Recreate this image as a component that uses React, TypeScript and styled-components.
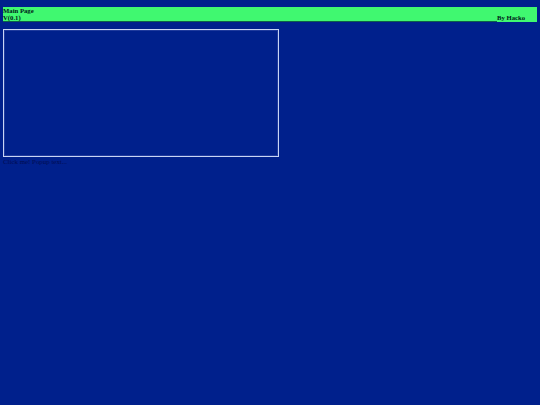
import { createGlobalStyle } from "styled-components";
import styled from "styled-components";

const GlobalStyle = createGlobalStyle`
  html, body {
    margin: 0;
    padding: 0;
    height: 100%;
    background: #00208c;
  }
  body {
    font-family: "Liberation Serif", "Times New Roman", serif;
  }
`;

const Wrapper = styled.div`
  width: 540px;
  height: 405px;
  padding: 7px 3px 0;
  box-sizing: border-box;
  overflow: hidden;
`;

const Banner = styled.header`
  background: #40f870;
  color: #00201a;
  height: 15px;
  font-size: 6.7px;
  font-weight: bold;
  line-height: 7.5px;
`;

const BannerRow = styled.div`
  display: flex;
  height: 7.5px;
`;

const Version = styled.span`
  flex: 1;
  border-bottom: 1px solid #10604a;
  height: 7px;
  line-height: 6px;
  box-sizing: border-box;
`;

const Credit = styled.span`
  width: 40px;
  line-height: 6px;
`;

const Screen = styled.div`
  width: 276px;
  height: 128px;
  margin-top: 7px;
  box-sizing: border-box;
  border: 1px solid #c8d4f4;
  box-shadow: inset 0 0 0 1px #1f3a9c;
`;

const Hint = styled.div`
  font-size: 6.9px;
  line-height: 9px;
  color: #000c50;
`;

function App() {
  return (
    <Wrapper>
      <GlobalStyle />
      <Banner>
        <BannerRow>Main Page</BannerRow>
        <BannerRow>
          <Version>V(0.1)</Version>
          <Credit>By Hacko</Credit>
        </BannerRow>
      </Banner>
      <Screen />
      <Hint>Click me! Popup text...</Hint>
    </Wrapper>
  );
}

export default App;
